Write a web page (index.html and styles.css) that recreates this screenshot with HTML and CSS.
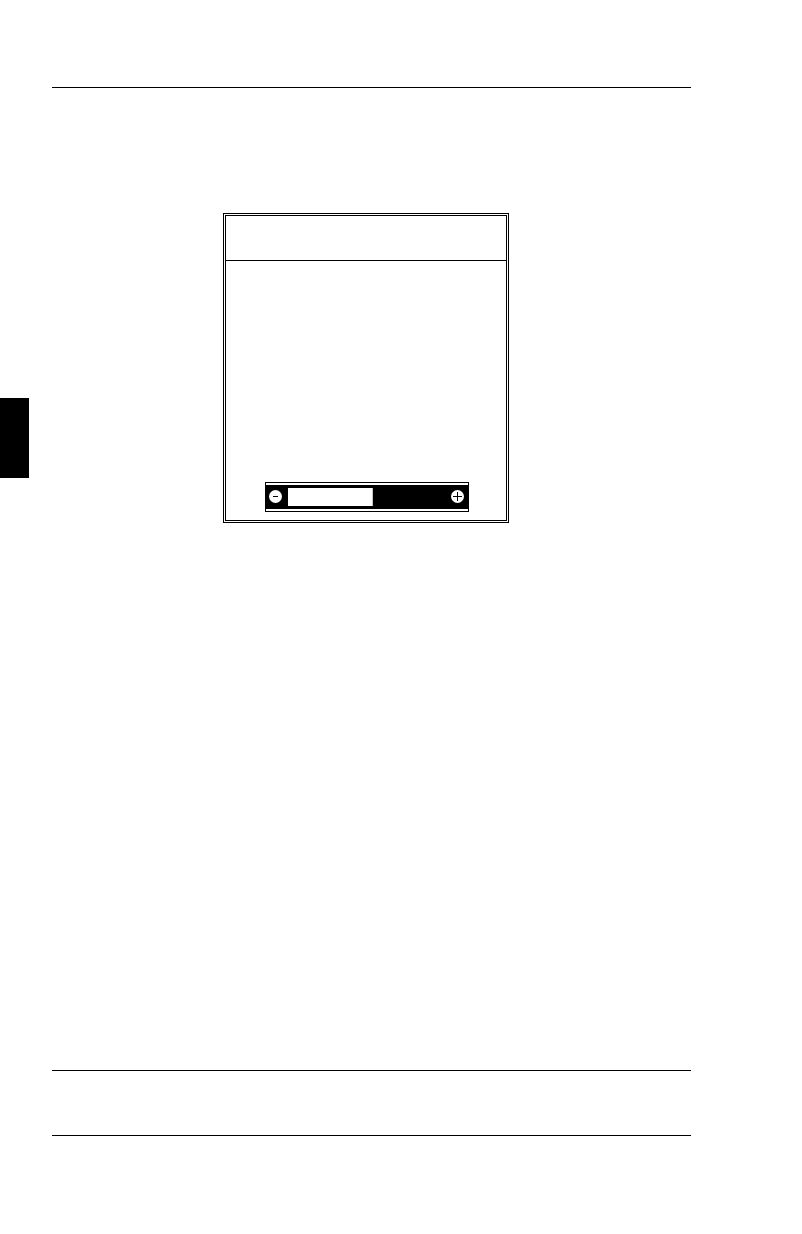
FILE: index.html
```html
<!DOCTYPE html>
<html lang="en">
<head>
<meta charset="utf-8">
<meta name="viewport" content="width=device-width, initial-scale=1">
<link rel="stylesheet" href="styles.css">
</head>
<body>
<div class="page">
  <aside class="gutter"><div class="thumb-tab"></div></aside>
  <div class="sheet">
    <header class="page-head"></header>
    <main class="content">
      <section class="panel">
        <div class="panel-head"></div>
        <div class="panel-body">
          <div class="level">
            <div class="level-bar">
              <button class="step" type="button" aria-label="Decrease">
                <svg class="icon" viewBox="0 0 13 13" aria-hidden="true"><circle cx="6.5" cy="6.5" r="6.5" fill="#fff"/><path d="M4 6.5h5" stroke="#000"/></svg>
              </button>
              <input class="slider" type="range" min="0" max="100" value="54" aria-label="Level">
              <button class="step" type="button" aria-label="Increase">
                <svg class="icon" viewBox="0 0 13 13" aria-hidden="true"><circle cx="6.5" cy="6.5" r="6.5" fill="#fff"/><path d="M2 6.5h9M6.5 2v9" stroke="#000"/></svg>
              </button>
            </div>
          </div>
        </div>
      </section>
    </main>
    <footer class="page-foot"></footer>
  </div>
</div>
</body>
</html>
```
FILE: styles.css
```css
* {
  box-sizing: border-box;
}

body {
  margin: 0;
  background: #fff;
  color: #000;
  font-family: "Liberation Sans", Arial, sans-serif;
}

.page {
  display: grid;
  grid-template-columns: 52px 1fr;
  min-height: 100vh;
  padding-right: 111px;
}

.gutter {
  padding-top: 398px;
}

.thumb-tab {
  width: 29px;
  height: 80px;
  background: #000;
}

.sheet {
  display: flex;
  flex-direction: column;
  padding-bottom: 98px;
}

.page-head {
  height: 88px;
  border-bottom: 1px solid #000;
}

.content {
  flex: 1;
  padding: 125px 0 0 171px;
}

.panel {
  max-width: 286px;
  border: 3px double #000;
}

.panel-head {
  height: 45px;
  border-bottom: 1px solid #000;
}

.panel-body {
  padding: 221px 37px 8px 39px;
}

.level {
  padding: 2px 0;
  border: 1px solid #000;
}

.level-bar {
  display: flex;
  align-items: center;
  gap: 6px;
  height: 24px;
  padding: 0 4px 0 3px;
  background: #000;
}

.step {
  display: flex;
  flex: none;
  padding: 0 0 1px;
  border: 0;
  background: none;
}

.icon {
  width: 13px;
  height: 13px;
}

.slider {
  flex: 1;
  min-width: 0;
  height: 18px;
  margin: 0;
  appearance: none;
  background: linear-gradient(#fff, #fff) 0 0 / 54% 100% no-repeat #000;
}

.slider::-webkit-slider-thumb {
  appearance: none;
  width: 1px;
  height: 18px;
  background: transparent;
}

.page-foot {
  height: 66px;
  border-top: 1px solid #000;
  border-bottom: 1px solid #000;
}
```
